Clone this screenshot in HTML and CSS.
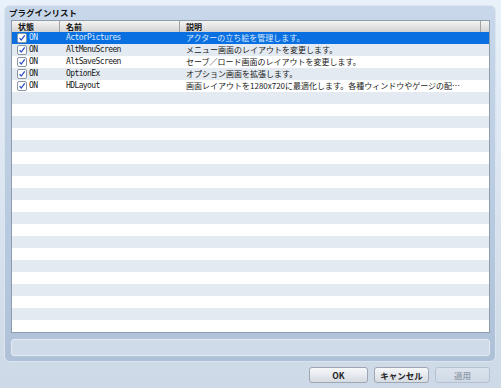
FILE: index.html
```html
<!DOCTYPE html>
<html lang="ja">
<head>
    <meta charset="UTF-8">
    <meta name="viewport" content="width=device-width, initial-scale=1.0">
    <title>プラグイン管理</title>
    <link rel="stylesheet" href="styles.css">
</head>
<body>

<div class="window">
    <div class="group">
        <div class="group-title">プラグインリスト</div>
        <div class="list">
            <div class="list-head">
                <div class="th">状態</div>
                <div class="th">名前</div>
                <div class="th">説明</div>
                <div class="th"></div>
            </div>
            <div class="list-body">
                <div class="row selected">
                    <div class="cell state"><span class="check"><svg viewBox="0 0 10 10"><path d="M2 5.2 L4 7.6 L8.4 1.6" /></svg></span>ON</div>
                    <div class="cell name">ActorPictures</div>
                    <div class="cell desc">アクターの立ち絵を管理します。</div>
                </div>
                <div class="row">
                    <div class="cell state"><span class="check"><svg viewBox="0 0 10 10"><path d="M2 5.2 L4 7.6 L8.4 1.6" /></svg></span>ON</div>
                    <div class="cell name">AltMenuScreen</div>
                    <div class="cell desc">メニュー画面のレイアウトを変更します。</div>
                </div>
                <div class="row">
                    <div class="cell state"><span class="check"><svg viewBox="0 0 10 10"><path d="M2 5.2 L4 7.6 L8.4 1.6" /></svg></span>ON</div>
                    <div class="cell name">AltSaveScreen</div>
                    <div class="cell desc">セーブ／ロード画面のレイアウトを変更します。</div>
                </div>
                <div class="row">
                    <div class="cell state"><span class="check"><svg viewBox="0 0 10 10"><path d="M2 5.2 L4 7.6 L8.4 1.6" /></svg></span>ON</div>
                    <div class="cell name">OptionEx</div>
                    <div class="cell desc">オプション画面を拡張します。</div>
                </div>
                <div class="row">
                    <div class="cell state"><span class="check"><svg viewBox="0 0 10 10"><path d="M2 5.2 L4 7.6 L8.4 1.6" /></svg></span>ON</div>
                    <div class="cell name">HDLayout</div>
                    <div class="cell desc">画面レイアウトを1280x720に最適化します。各種ウィンドウやゲージの配…</div>
                </div>
            </div>
        </div>
        <div class="status-field"></div>
    </div>
    <div class="buttons">
        <button class="btn btn-ok">OK</button>
        <button class="btn">キャンセル</button>
        <button class="btn" disabled>適用</button>
    </div>
</div>

</body>
</html>
```

FILE: styles.css
```css
body {
    margin: 0;
    padding: 0;
    font-family: "Noto Sans CJK JP", "DejaVu Sans", sans-serif;
    color: #222;
}
.window {
    width: 501px;
    height: 388px;
    box-sizing: border-box;
    padding: 5px 5px 0 4px;
    background: linear-gradient(#e9f1fa, #cdd9e6);
    display: flex;
    flex-direction: column;
}
.group {
    height: 357px;
    box-sizing: border-box;
    padding: 0 5px 0 6px;
    border: 1px solid #dae5f1;
    border-radius: 6px;
    background: linear-gradient(#c8d8ea, #aec1d8);
    display: flex;
    flex-direction: column;
}
.group-title {
    height: 14px;
    line-height: 13px;
    margin-left: -2px;
    font-size: 8.5px;
    font-weight: bold;
    color: #111;
}
.list {
    height: 313px;
    box-sizing: border-box;
    border: 1px solid #8f9cab;
    background: #fff;
    display: flex;
    flex-direction: column;
}
.list-head {
    height: 11px;
    display: grid;
    grid-template-columns: 48px 120px 301px 1fr;
    background: linear-gradient(#f5f5f5, #d3d3d3);
    border-bottom: 1px solid #999;
    box-sizing: content-box;
    margin-bottom: -1px;
}
.th {
    font-size: 8px;
    font-weight: bold;
    line-height: 11px;
    padding-left: 6px;
    border-right: 1px solid #a2a2a2;
    color: #111;
}
.th:last-child {
    border-right: none;
}
.list-body {
    flex: 1;
    background: repeating-linear-gradient(#fff 0 12px, #e4eaf1 12px 24px);
}
.row {
    height: 12px;
    display: grid;
    grid-template-columns: 48px 120px 1fr;
    font-size: 8px;
    line-height: 12px;
    color: #1a1a1a;
}
.row.selected {
    background: #0a70e2;
    color: #dcecff;
}
.cell {
    white-space: nowrap;
    overflow: hidden;
}
.state {
    display: flex;
    align-items: center;
    padding-left: 5px;
    font-family: "DejaVu Sans Mono", monospace;
    font-size: 8px;
    letter-spacing: -0.6px;
}
.check {
    width: 8px;
    height: 8px;
    margin-right: 2px;
    border: 1px solid #8a96a5;
    border-radius: 2px;
    background: #fff;
    display: flex;
}
.check svg {
    width: 8px;
    height: 8px;
}
.check path {
    fill: none;
    stroke: #2648c4;
    stroke-width: 1.5;
}
.name {
    padding-left: 6px;
    font-family: "DejaVu Sans Mono", monospace;
    font-size: 8px;
    letter-spacing: -0.6px;
}
.desc {
    padding-left: 6px;
}
.status-field {
    height: 17px;
    box-sizing: border-box;
    margin-top: 6px;
    border: 1px solid #e2eaf3;
    border-radius: 3px;
    background: #cfdbe8;
    box-shadow: 0 0 0 1px #b3c4d8;
}
.buttons {
    display: flex;
    justify-content: flex-end;
    gap: 6px;
    padding: 5px 6px 0 0;
}
.btn {
    height: 16px;
    width: 55px;
    padding: 0;
    font-family: "Noto Sans CJK JP", sans-serif;
    font-size: 8.5px;
    font-weight: bold;
    color: #222;
    border: 1px solid #9ea7b2;
    border-radius: 3px;
    background: linear-gradient(#f7f8fa, #d6dbe2);
}
.btn-ok {
    width: 59px;
}
.btn:disabled {
    color: #9aa4b0;
    border-color: #b6c2d0;
    background: linear-gradient(#dbe4ee, #cfd9e5);
}
```
